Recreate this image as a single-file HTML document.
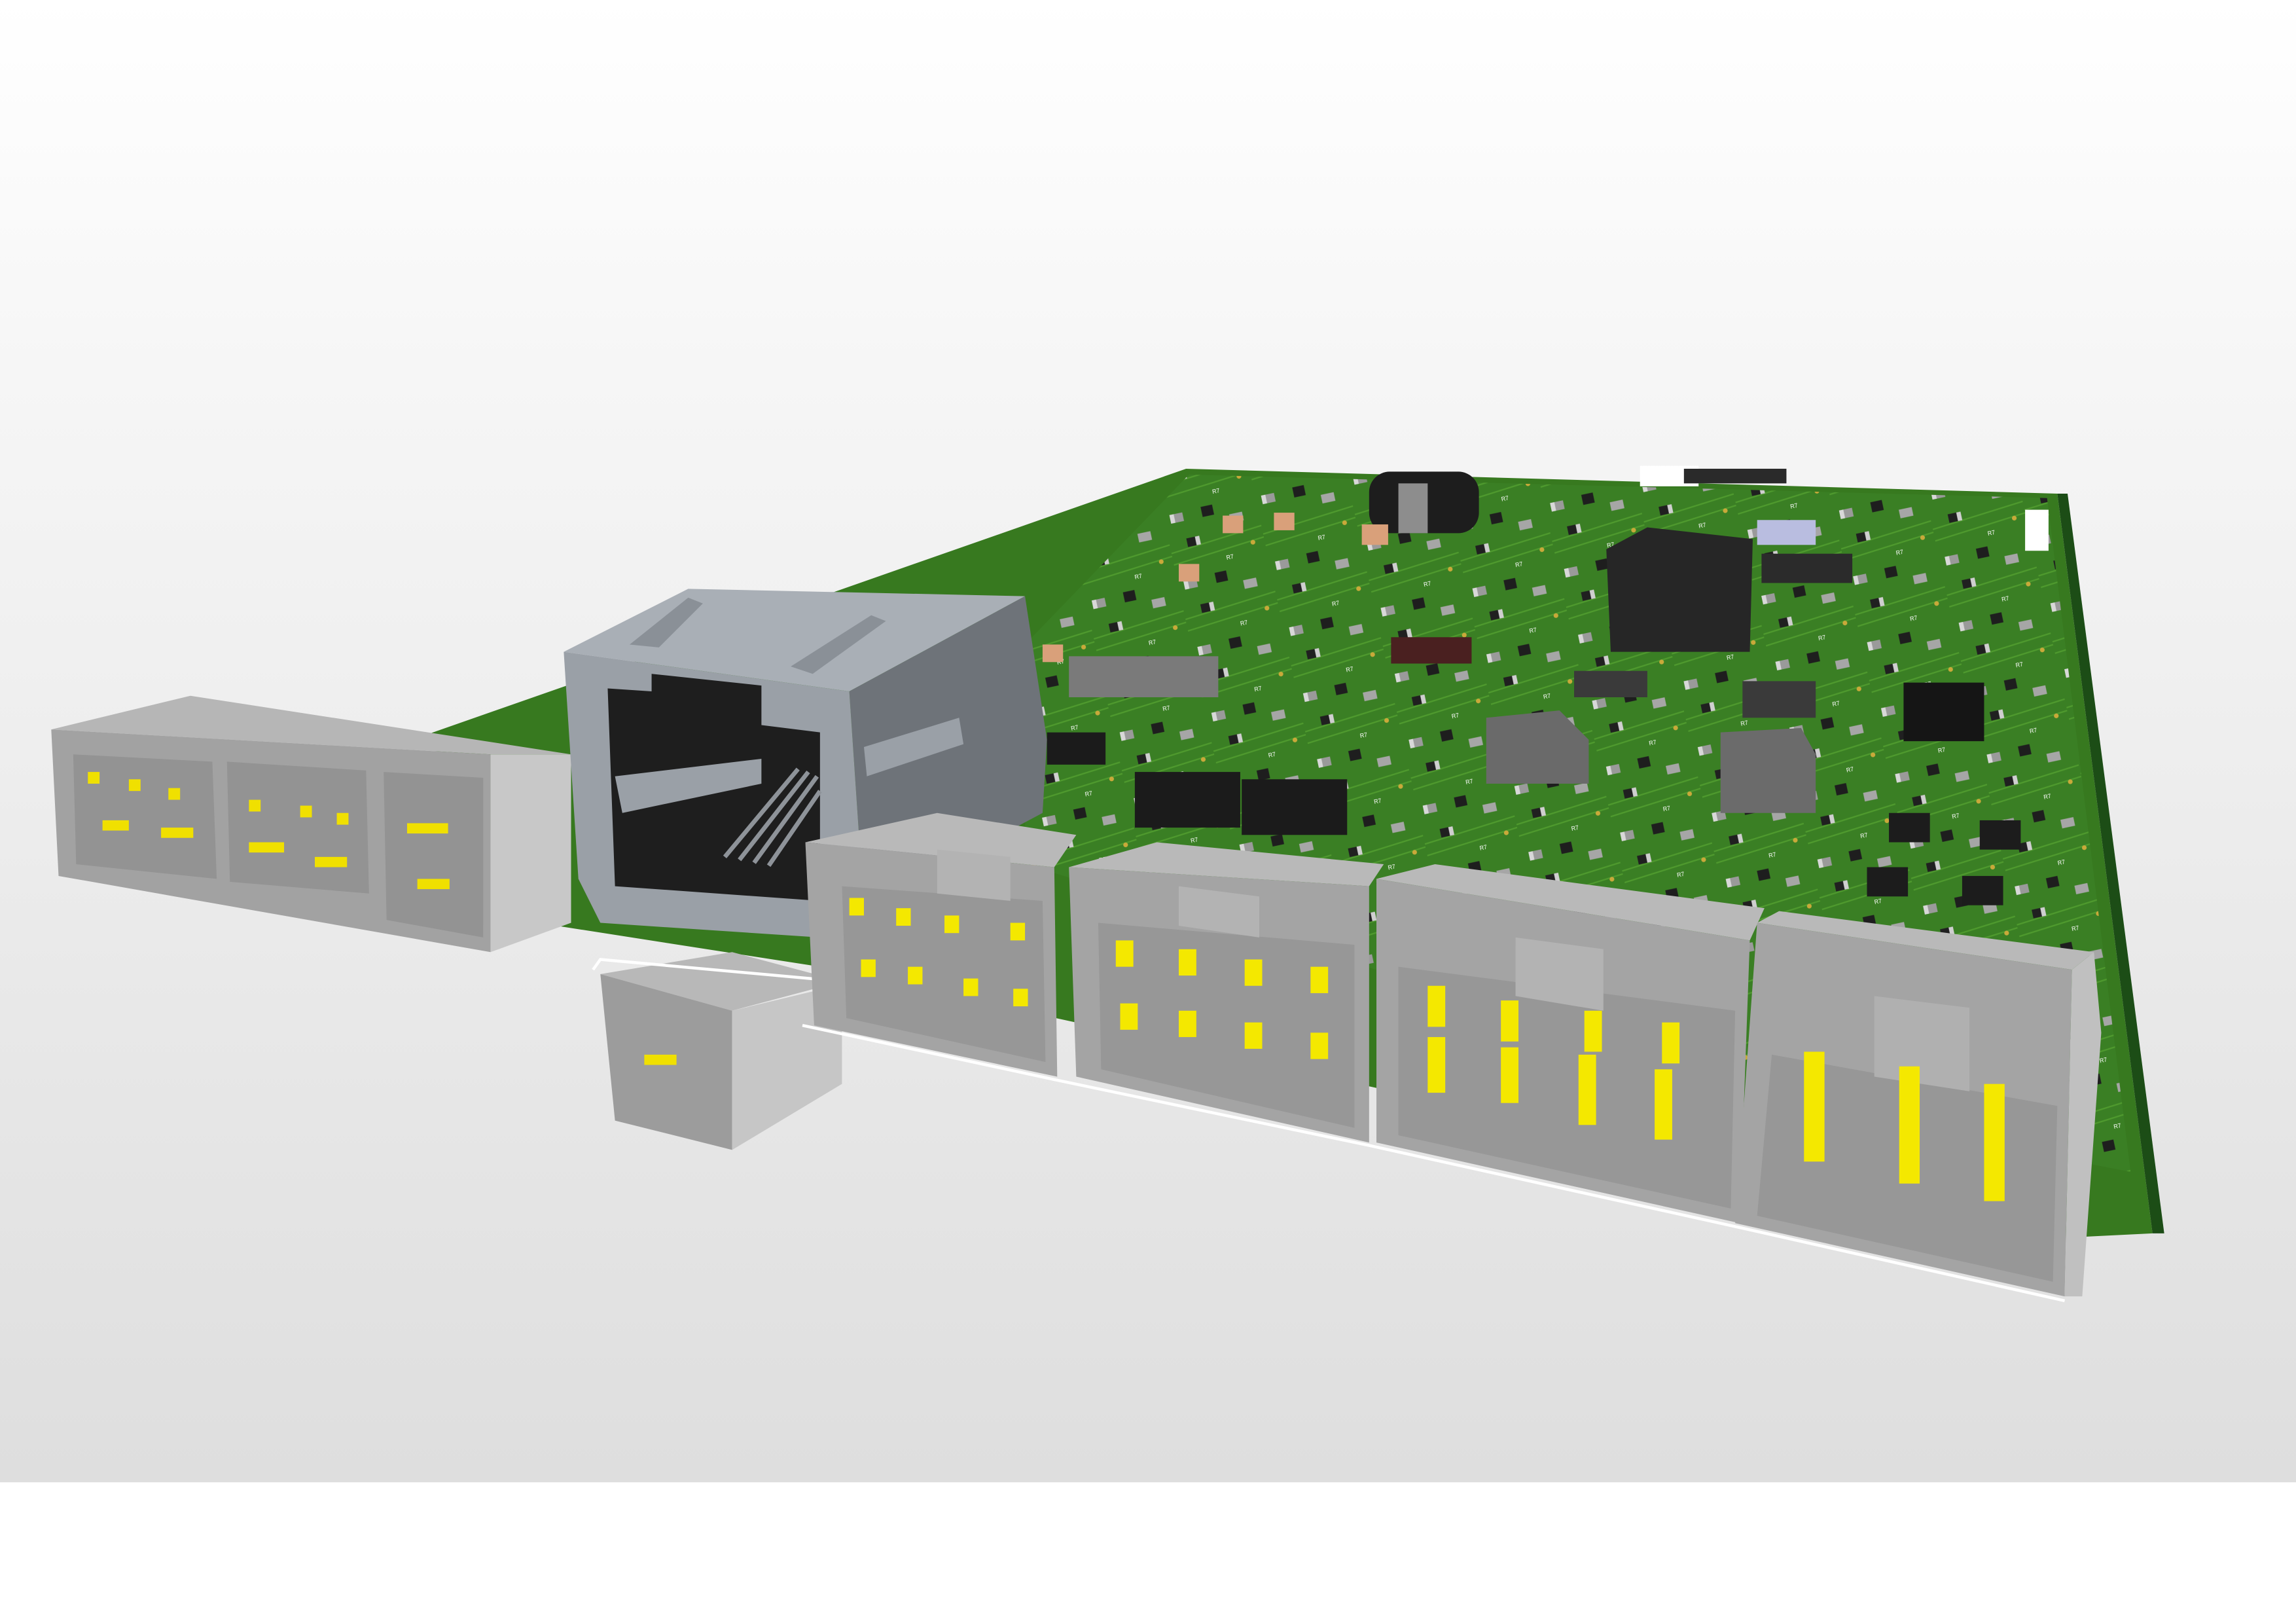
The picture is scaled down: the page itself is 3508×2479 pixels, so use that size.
<!DOCTYPE html>
<html><head><meta charset="utf-8"><style>
html,body{margin:0;padding:0;background:#fff;overflow:hidden}
svg{display:block}
</style></head><body>
<svg width="3508" height="2479" viewBox="0 0 1568 1108" preserveAspectRatio="none" xmlns="http://www.w3.org/2000/svg">
<defs>
<linearGradient id="bg" x1="0" y1="0" x2="0" y2="1">
<stop offset="0" stop-color="#ffffff"/><stop offset="0.25" stop-color="#f6f6f6"/><stop offset="1" stop-color="#dedede"/>
</linearGradient>
<pattern id="comp" width="64" height="46" patternUnits="userSpaceOnUse" patternTransform="rotate(-12)">
<rect width="64" height="46" fill="#3a7f24"/>
<path d="M0 30 L64 24 M0 38 L64 32" stroke="#4f9a2e" stroke-width="1"/>
<rect x="4" y="4" width="9" height="6" fill="#9a9a9a"/><rect x="4" y="4" width="3" height="6" fill="#d8d8d8"/>
<rect x="26" y="3" width="8" height="7" fill="#1e1e1e"/>
<rect x="44" y="12" width="9" height="6" fill="#a6a6a6"/>
<rect x="12" y="22" width="8" height="6" fill="#202020"/><rect x="18" y="22" width="3" height="6" fill="#cfcfcf"/>
<text x="36" y="42" font-family="Liberation Sans, sans-serif" font-size="4" fill="#fff">R7</text>
<circle cx="56" cy="34" r="1.6" fill="#c9a93a"/>
</pattern>
</defs>
<rect width="1568" height="1012" fill="url(#bg)"/>
<rect y="1012" width="1568" height="96" fill="#fff"/>

<polygon points="290,502 810,320 1405,337 1470,842 1410,845 560,660 380,632" fill="#37791f"/>
<polygon points="1405,337 1412,337 1478,842 1470,842" fill="#1c4d16"/>
<polygon points="700,440 812,324 1398,340 1455,800 1300,770 700,590" fill="url(#comp)"/>
<rect x="935" y="322" width="75" height="42" rx="14" fill="#1d1d1d"/>
<rect x="955" y="330" width="20" height="34" fill="#8d8d8d"/>
<polygon points="1097,375 1125,360 1197,368 1195,445 1100,445" fill="#262626"/>
<rect x="1120" y="318" width="40" height="14" fill="#fff"/>
<rect x="1150" y="320" width="70" height="10" fill="#2a2a2a"/>
<rect x="1200" y="355" width="40" height="17" fill="#b9bde0"/>
<rect x="1203" y="378" width="62" height="20" fill="#2b2b2b"/>
<polygon points="1015,490 1065,485 1085,505 1085,535 1015,535" fill="#6a6a6a"/>
<polygon points="1175,500 1230,497 1240,515 1240,555 1175,555" fill="#6b6b6b"/>
<rect x="1300" y="466" width="55" height="40" fill="#151515"/>
<rect x="1075" y="458" width="50" height="18" fill="#3a3a3a"/>
<rect x="1190" y="465" width="50" height="25" fill="#3a3a3a"/>
<rect x="730" y="448" width="102" height="28" fill="#7a7a7a"/>
<rect x="950" y="435" width="55" height="18" fill="#4a2020"/>
<rect x="775" y="527" width="72" height="38" fill="#1b1b1b"/>
<rect x="848" y="532" width="72" height="38" fill="#1b1b1b"/>
<rect x="715" y="500" width="40" height="22" fill="#1b1b1b"/>
<rect x="1290" y="555" width="28" height="20" fill="#1c1c1c"/><rect x="1352" y="560" width="28" height="20" fill="#1c1c1c"/>
<rect x="1275" y="592" width="28" height="20" fill="#1c1c1c"/><rect x="1340" y="598" width="28" height="20" fill="#1c1c1c"/>
<rect x="835" y="352" width="14" height="12" fill="#d9a07a"/><rect x="870" y="350" width="14" height="12" fill="#d9a07a"/>
<rect x="930" y="358" width="18" height="14" fill="#d9a07a"/><rect x="805" y="385" width="14" height="12" fill="#d9a07a"/>
<rect x="712" y="440" width="14" height="12" fill="#d9a07a"/>
<rect x="1383" y="348" width="16" height="28" fill="#fff"/>

<polygon points="35,498 130,475 390,515 335,515" fill="#b6b6b6"/>
<polygon points="35,498 335,515 335,650 40,598" fill="#a2a2a2"/>
<polygon points="335,515 390,515 390,630 335,650" fill="#c8c8c8"/>
<polygon points="50,515 145,520 148,600 52,590" fill="#939393"/>
<polygon points="155,520 250,526 252,610 157,602" fill="#939393"/>
<polygon points="262,527 330,531 330,640 264,628" fill="#939393"/>
<g fill="#f0e000">
<rect x="60" y="527" width="8" height="8"/><rect x="88" y="532" width="8" height="8"/><rect x="115" y="538" width="8" height="8"/>
<rect x="70" y="560" width="18" height="7"/><rect x="110" y="565" width="22" height="7"/>
<rect x="170" y="546" width="8" height="8"/><rect x="205" y="550" width="8" height="8"/><rect x="230" y="555" width="8" height="8"/>
<rect x="170" y="575" width="24" height="7"/><rect x="215" y="585" width="22" height="7"/>
<rect x="278" y="562" width="28" height="7"/><rect x="285" y="600" width="22" height="7"/>
</g>

<polygon points="385,445 470,402 700,407 580,472" fill="#a9afb6"/>
<polygon points="580,472 700,407 715,505 712,555 590,620" fill="#6e7379"/>
<polygon points="385,445 580,472 590,620 560,640 410,630 395,600" fill="#9aa0a7"/>
<polygon points="415,470 445,472 445,460 520,468 520,495 560,500 560,615 420,605" fill="#1e1e1e"/>
<polygon points="420,530 520,518 520,535 425,555" fill="#9aa0a7"/>
<polygon points="590,510 655,490 658,508 592,530" fill="#9aa0a7"/>
<g stroke="#8e9399" stroke-width="3"><line x1="495" y1="585" x2="545" y2="525"/><line x1="505" y1="587" x2="552" y2="527"/><line x1="515" y1="589" x2="558" y2="530"/><line x1="525" y1="591" x2="560" y2="540"/></g>
<polygon points="430,440 470,408 480,412 450,442" fill="#8a9097"/>
<polygon points="540,455 595,420 605,424 555,460" fill="#8a9097"/>

<polygon points="410,665 500,650 575,670 500,690" fill="#b8b8b8"/>
<polygon points="410,665 500,690 500,785 420,765" fill="#9c9c9c"/>
<polygon points="500,690 575,672 575,740 500,785" fill="#c6c6c6"/>
<rect x="440" y="720" width="22" height="7" fill="#f0e000"/>
<polyline points="405,662 410,655 575,670" stroke="#fff" fill="none" stroke-width="2"/>

<polygon points="550,575 640,555 735,570 720,592" fill="#b9b9b9"/>
<polygon points="550,575 720,592 722,735 556,700" fill="#a4a4a4"/>
<polygon points="575,605 712,615 714,725 578,695" fill="#979797"/>
<polygon points="730,592 790,575 945,590 935,605" fill="#b9b9b9"/>
<polygon points="730,592 935,605 935,780 735,735" fill="#a4a4a4"/>
<polygon points="750,630 925,645 925,770 752,730" fill="#979797"/>
<polygon points="940,600 980,590 1205,620 1195,642" fill="#b9b9b9"/>
<polygon points="940,600 1195,642 1188,835 940,780" fill="#a4a4a4"/>
<polygon points="955,660 1185,690 1182,825 955,775" fill="#979797"/>
<polygon points="1200,630 1215,622 1430,650 1415,662" fill="#b9b9b9"/>
<polygon points="1200,630 1415,662 1410,885 1185,835" fill="#a4a4a4"/>
<polygon points="1415,662 1430,650 1435,705 1422,885 1410,885" fill="#c0c0c0"/>
<polygon points="1210,720 1405,755 1402,875 1200,830" fill="#979797"/>
<polygon points="1280,680 1345,688 1345,745 1280,735" fill="#b0b0b0"/>
<g fill="#b3b3b3">
<polygon points="640,580 690,585 690,615 640,610"/><polygon points="805,605 860,612 860,640 805,632"/>
<polygon points="1035,640 1095,648 1095,690 1035,680"/>
</g>
<g fill="#f4e800">
<rect x="580" y="613" width="10" height="12"/><rect x="612" y="620" width="10" height="12"/><rect x="645" y="625" width="10" height="12"/><rect x="690" y="630" width="10" height="12"/>
<rect x="588" y="655" width="10" height="12"/><rect x="620" y="660" width="10" height="12"/><rect x="658" y="668" width="10" height="12"/><rect x="692" y="675" width="10" height="12"/>
<rect x="762" y="642" width="12" height="18"/><rect x="805" y="648" width="12" height="18"/><rect x="850" y="655" width="12" height="18"/><rect x="895" y="660" width="12" height="18"/>
<rect x="765" y="685" width="12" height="18"/><rect x="805" y="690" width="12" height="18"/><rect x="850" y="698" width="12" height="18"/><rect x="895" y="705" width="12" height="18"/>
<rect x="975" y="673" width="12" height="28"/><rect x="1025" y="683" width="12" height="28"/><rect x="1082" y="690" width="12" height="28"/><rect x="1135" y="698" width="12" height="28"/>
<rect x="975" y="708" width="12" height="38"/><rect x="1025" y="715" width="12" height="38"/><rect x="1078" y="720" width="12" height="48"/><rect x="1130" y="730" width="12" height="48"/>
<rect x="1232" y="718" width="14" height="75"/><rect x="1297" y="728" width="14" height="80"/><rect x="1355" y="740" width="14" height="80"/>
</g>
<polyline points="548,700 720,737 935,782 1188,838 1410,888" stroke="#fff" stroke-width="2" fill="none"/>
</svg>
</body></html>
